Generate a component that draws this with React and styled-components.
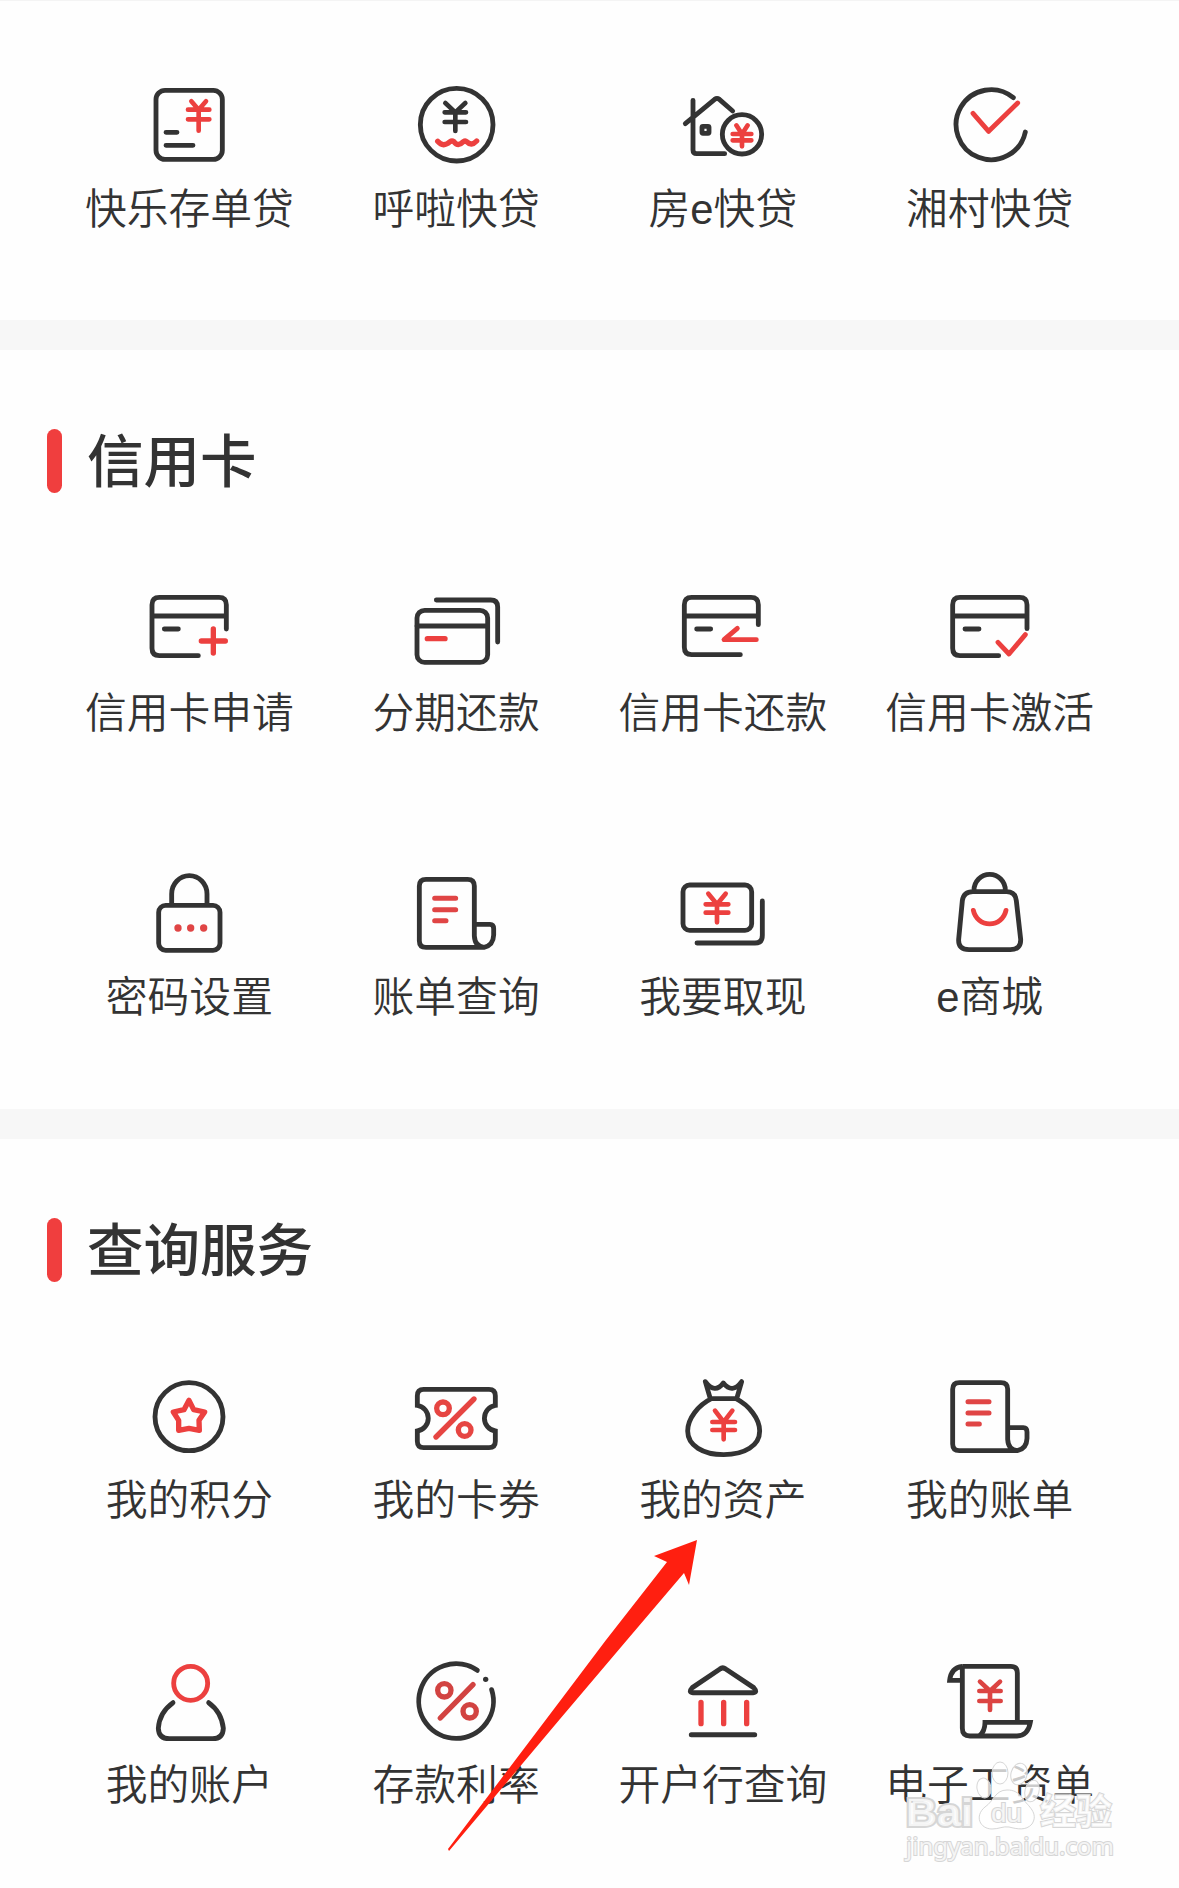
import React from "react";
import styled, { createGlobalStyle } from "styled-components";

const INK = "#333333";
const RED = "#ec403f";

const GlobalStyle = createGlobalStyle`
  * { box-sizing: border-box; }
  body {
    margin: 0;
    background: #fefefe;
    color: ${INK};
    font-family: "Liberation Sans", "Noto Sans CJK SC", sans-serif;
  }
`;

const Page = styled.main`
  position: relative;
  width: 1179px;
  height: 1888px;
  overflow: hidden;
  border-top: 1px solid #f4f4f4;
`;

const Section = styled.section`
  padding: ${(p) => p.$top}px 0 ${(p) => p.$bottom}px;
  & + & { border-top: 30px solid #f7f7f7; }
`;

const Header = styled.header`
  display: flex;
  align-items: center;
  gap: 25px;
  height: 64px;
  padding-left: 47px;
  margin-bottom: ${(p) => p.$gap}px;
`;

const Marker = styled.span`
  width: 15px;
  height: 64px;
  border-radius: 8px;
  background: #f03e3e;
`;

const Title = styled.h2`
  margin: 0;
  padding-top: 4px;
  font-size: 56.5px;
  line-height: 64px;
  font-weight: 500;
`;

const Grid = styled.div`
  display: grid;
  grid-template-columns: repeat(4, 1fr);
  row-gap: ${(p) => p.$gap || 0}px;
  padding: 0 56px;
`;

const Item = styled.div`
  display: flex;
  flex-direction: column;
  align-items: center;
  gap: 15px;
`;

const Icon = styled.svg`
  width: 100px;
  height: 90px;
  fill: none;
  stroke: ${INK};
  stroke-width: 14.5;
  stroke-linecap: round;
  stroke-linejoin: round;
`;

const Label = styled.span`
  font-size: 41.8px;
  line-height: 50px;
  font-weight: 350;
  white-space: nowrap;
`;

const Arrow = styled.svg`
  position: absolute;
  left: 440px;
  top: 1529px;
  width: 270px;
  height: 330px;
  fill: #ff1f10;
`;

const Watermark = styled.div`
  position: absolute;
  left: 903px;
  top: 1759px;
  width: 220px;
  height: 110px;
`;

const WatermarkArt = styled.svg`
  display: block;
  width: 220px;
  height: 110px;
  fill: rgba(255, 255, 255, 0.75);
  stroke: #d6d6d6;
  stroke-width: 1;
  text { font-family: "Liberation Sans", "Noto Sans CJK SC", sans-serif; paint-order: stroke; }
  .site { font-family: "Noto Sans", sans-serif; }
`;

const Yen = ({ x, y, w = 64, h = 88, arm = 22, b1 = 25, b2 = 54, color = RED, sw = 14 }) => (
  <path
    stroke={color}
    strokeWidth={sw}
    d={`M${x - arm} ${y}L${x} ${y + b1}L${x + arm} ${y}M${x - w / 2} ${y + b1}h${w}M${x - w / 2} ${y + b2}h${w}M${x} ${y + b1}V${y + h}`}
  />
);

const Scroll = ({ dx = 0, dy = 0 }) => (
  <g transform={`translate(${dx} ${dy})`}>
    <path d="M1272 292H1098Q1078 292 1078 272V108Q1078 88 1098 88H1223Q1243 88 1243 108V258Q1245 290 1272 292Q1300 286 1301 255V236Q1301 223 1290 223H1245" />
    <path stroke="#e04545" d="M1124 145h63M1124 179h63M1124 212h34" strokeLinecap="round" strokeWidth="15" />
  </g>
);

const Card = ({ right = 500, rightEnd = 177, bottomEnd = 416, x = 277, bottom = 257 }) => (
  <path
    d={`M${bottomEnd} ${bottom}H${x + 22}Q${x} ${bottom} ${x} ${bottom - 22}V104Q${x} 82 ${x + 22} 82H${right - 22}Q${right} 82 ${right} 104V${rightEnd}M${x} 138H${right}M${x + 37} 177h42`}
  />
);

const icons = {
  deposit: ["238 30", <>
    <rect x="289" y="61" width="199" height="207" rx="27" />
    <path d="M319 187h33M319 226h81" />
    <Yen x={417} y={94} />
  </>],
  hula: ["1038 30", <>
    <circle cx="1190" cy="164" r="109" />
    <Yen x={1186} y={99} color={INK} b1={28} b2={57} h={84} arm={30} />
    <path stroke={RED} strokeWidth="16" d="M1133 214Q1150 234 1170 215Q1176 211 1182 215Q1194 232 1210 215Q1216 211 1220 215Q1234 230 1250 213" />
  </>],
  house: ["219 30", <>
    <path d="M279 91V240Q279 251 290 251H374M256 161L344 88Q351 83 358 88L398 123" />
    <rect x="306" y="169" width="21" height="21" rx="3" />
    <circle cx="426" cy="193" r="59" />
    <Yen x={426} y={166} w={56} arm={17} b1={26} b2={45} h={63} />
  </>],
  village: ["1019 30", <>
    <path d="M1239 83A105 105 0 1 0 1275 186" />
    <path stroke={RED} d="M1118 130L1165 184L1252 99" />
  </>],
  apply: ["238 42", <>
    <Card />
    <path stroke={RED} strokeWidth="16" d="M425 213h72M461 177v72" />
  </>],
  installment: ["1038 42", <>
    <rect x="1071" y="121" width="212" height="156" rx="23" />
    <path d="M1071 168h212M1129 90H1292Q1313 90 1313 111V216" />
    <path stroke={RED} strokeWidth="16" d="M1102 206h53" />
  </>],
  repay: ["219 42", <>
    <Card x={253} right={475} rightEnd={164} bottomEnd={421} bottom={254} />
    <path stroke={RED} d="M412 175L372 209H469" />
  </>],
  activate: ["1019 42", <>
    <Card x={1057} right={1280} rightEnd={176} bottomEnd={1195} />
    <path stroke={RED} d="M1193 217L1226 252L1275 194" />
  </>],
  lock: ["238 54", <>
    <rect x="297" y="166" width="184" height="135" rx="21" />
    <path d="M336 162V132A53 55 0 0 1 442 132V162" />
    <g fill="#e04545" stroke="none"><circle cx="355" cy="234" r="11" /><circle cx="393" cy="234" r="11" /><circle cx="432" cy="234" r="11" /></g>
  </>],
  bill: ["1038 54", <Scroll />],
  cash: ["219 54", <>
    <rect x="249" y="105" width="206" height="136" rx="20" />
    <path d="M487 153V256Q487 279 465 279H291" />
    <Yen x={351} y={131} w={68} arm={26} b1={32} b2={57} h={86} />
  </>],
  mall: ["1019 54", <>
    <path d="M1118 125H1219Q1245 125 1248 152L1261 268Q1262 299 1230 299H1106Q1073 299 1075 268L1086 152Q1090 125 1118 125ZM1121 121A46 47 0 0 1 1215 121" />
    <path stroke={RED} d="M1119 181A50 51 0 0 0 1217 181" />
  </>],
  points: ["238 33", <>
    <circle cx="388" cy="170" r="102" />
    <path stroke={RED} strokeWidth="16" d="M388 121L402 149L435 156L418 181L419 211L388 205L357 211L357 181L341 156L373 149Z" />
  </>],
  coupon: ["1038 33", <>
    <path d="M1072 136V107Q1072 88 1091 88H1287Q1306 88 1306 107V136A39 39 0 0 0 1306 213V244Q1306 263 1287 263H1091Q1072 263 1072 244V213A39 39 0 0 0 1072 136Z" strokeLinejoin="miter" />
    <g stroke="#e64542" strokeWidth="16"><circle cx="1149" cy="145" r="19" /><circle cx="1214" cy="210" r="19" /><path d="M1128 231L1242 117" /></g>
  </>],
  assets: ["219 33", <>
    <path d="M334 116C294 136 263 176 263 213C263 257 310 284 371 284C434 284 479 257 479 213C479 176 447 136 408 116ZM330 113L316 65Q345 103 370 69Q397 103 425 65L411 113" />
    <Yen x={371} y={152} w={68} arm={26} b1={34} b2={58} h={86} />
  </>],
  statement: ["1019 33", <Scroll dx={-21} dy={-20} />],
  account: ["238 48", <>
    <circle stroke={RED} cx="393" cy="130" r="51" />
    <path d="M340 188Q299 217 296 265Q297 296 329 296H459Q490 296 491 265Q486 216 447 188" />
  </>],
  rate: ["1038 48", <>
    <path d="M1252 91A112 112 0 1 0 1295 149" />
    <circle cx="1277" cy="118" r="8" fill={INK} stroke="none" />
    <g stroke="#d24341" strokeWidth="16"><circle cx="1153" cy="151" r="20" /><circle cx="1229" cy="214" r="20" /><path d="M1141 234L1239 134" /></g>
  </>],
  bank: ["9 48", <>
    <path strokeWidth="15" d="M150 87Q158 80 167 87L251 143Q264 157 249 158H69Q54 157 67 143ZM64 284H254" />
    <path stroke={RED} strokeWidth="16" d="M93 187V251M161 187V251M230 187V251" />
  </>],
  payroll: ["809 48", <>
    <path strokeLinejoin="miter" strokeLinecap="butt" d="M876 79H1021Q1041 79 1041 99V246M876 79Q842 83 838 121H876M876 79V265Q876 288 899 288H1040Q1073 287 1080 247H944Q944 276 926 288" />
    <Yen x={959} y={125} color="#dc4442" w={64} arm={30} b1={28} b2={58} h={85} />
  </>],
};

const loans = [["deposit", "快乐存单贷"], ["hula", "呼啦快贷"], ["house", "房e快贷"], ["village", "湘村快贷"]];
const cards = [
  ["apply", "信用卡申请"], ["installment", "分期还款"], ["repay", "信用卡还款"], ["activate", "信用卡激活"],
  ["lock", "密码设置"], ["bill", "账单查询"], ["cash", "我要取现"], ["mall", "e商城"],
];
const queries = [
  ["points", "我的积分"], ["coupon", "我的卡券"], ["assets", "我的资产"], ["statement", "我的账单"],
  ["account", "我的账户"], ["rate", "存款利率"], ["bank", "开户行查询"], ["payroll", "电子工资单"],
];

const Services = ({ items, gap }) => (
  <Grid $gap={gap}>
    {items.map(([name, label]) => (
      <Item key={name}>
        <Icon viewBox={`${icons[name][0]} 300 270`}>{icons[name][1]}</Icon>
        <Label>{label}</Label>
      </Item>
    ))}
  </Grid>
);

export default function App() {
  return (
    <Page>
      <GlobalStyle />
      <Section $top={79} $bottom={85}>
        <Services items={loans} />
      </Section>
      <Section $top={79} $bottom={86}>
        <Header $gap={91}><Marker /><Title>信用卡</Title></Header>
        <Services items={cards} gap={129} />
      </Section>
      <Section $top={79} $bottom={77}>
        <Header $gap={89}><Marker /><Title>查询服务</Title></Header>
        <Services items={queries} gap={130} />
      </Section>
      <Arrow viewBox="440 1530 270 330">
        <path d="M697 1540L654 1556L667 1562L606 1640L560 1701L448 1849L449 1851L560 1719L627 1640L684 1573L689 1585Z" />
      </Arrow>
      <Watermark>
        <WatermarkArt viewBox="903 1760 220 110">
          <text x="906" y="1826" fontSize="38" fontWeight="700" strokeWidth="4" textLength="67" lengthAdjust="spacingAndGlyphs">Bai</text>
          <ellipse cx="984" cy="1788" rx="7" ry="10" transform="rotate(-10 984 1788)" />
          <ellipse cx="1000" cy="1773" rx="8" ry="11" />
          <ellipse cx="1019" cy="1774" rx="8" ry="11" transform="rotate(15 1019 1774)" />
          <ellipse cx="1032" cy="1791" rx="7" ry="11" transform="rotate(15 1032 1791)" />
          <path d="M1007 1790C995 1790 994 1801 985 1807C974 1816 980 1829 992 1829C999 1829 1003 1826 1009 1827C1017 1829 1026 1831 1032 1824C1039 1813 1028 1806 1023 1799C1018 1792 1014 1790 1007 1790Z" />
          <text x="991" y="1822" fontSize="25" fontWeight="400" strokeWidth="2" textLength="31" lengthAdjust="spacingAndGlyphs">du</text>
          <text x="1040" y="1825" fontSize="36" fontWeight="700" strokeWidth="2" textLength="72">经验</text>
          <text className="site" x="906" y="1855" fontSize="24" strokeWidth="2" textLength="208" lengthAdjust="spacingAndGlyphs">jingyan.baidu.com</text>
        </WatermarkArt>
      </Watermark>
    </Page>
  );
}
